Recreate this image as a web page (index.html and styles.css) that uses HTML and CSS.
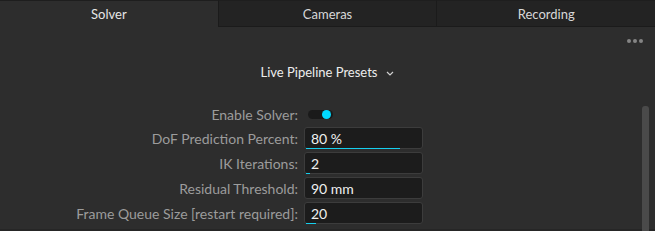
FILE: index.html
```html
<!DOCTYPE html>
<html>
<head>
<meta charset="utf-8">
<link rel="stylesheet" href="styles.css">
</head>
<body>
<div class="app">
  <div class="tabs">
    <div class="tab active">Solver</div>
    <div class="tab">Cameras</div>
    <div class="tab">Recording</div>
  </div>
  <div class="content">
    <div class="menu-row"><span class="dots"><i></i><i></i><i></i></span></div>
    <div class="presets">
      <span>Live Pipeline Presets</span>
      <svg class="chev" width="8" height="5" viewBox="0 0 8 5"><path d="M1 1 L4 4 L7 1" fill="none" stroke="#d0d0d0" stroke-width="1.2"/></svg>
    </div>
    <div class="form">
      <div class="row">
        <label>Enable Solver:</label>
        <div class="toggle"><span class="knob"></span></div>
      </div>
      <div class="row">
        <label>DoF Prediction Percent:</label>
        <div class="field"><span class="val">80 %</span><span class="bar" style="width:80%"></span></div>
      </div>
      <div class="row">
        <label>IK Iterations:</label>
        <div class="field"><span class="val">2</span><span class="bar" style="width:4px"></span></div>
      </div>
      <div class="row">
        <label>Residual Threshold:</label>
        <div class="field"><span class="val">90 mm</span></div>
      </div>
      <div class="row">
        <label>Frame Queue Size [restart required]:</label>
        <div class="field"><span class="val">20</span><span class="bar" style="width:10px"></span></div>
      </div>
    </div>
    <div class="scrollbar"></div>
  </div>
</div>
</body>
</html>
```
FILE: styles.css
```css
html, body {
  margin: 0;
  padding: 0;
  background: #2d2d2d;
}
body {
  font-family: Lato, "Open Sans", sans-serif;
  font-size: 13px;
  width: 655px;
  height: 231px;
  overflow: hidden;
}
.app {
  width: 655px;
  height: 231px;
  display: flex;
  flex-direction: column;
}
.tabs {
  display: flex;
  height: 27px;
  flex: none;
}
.tab {
  flex: 1;
  display: flex;
  align-items: center;
  justify-content: center;
  background: #232323;
  color: #d8d8d8;
  border-top: 1px solid #1e1e1e;
  border-bottom: 1px solid #1b1b1b;
  border-left: 1px solid #1b1b1b;
  box-sizing: border-box;
}
.tab.active {
  background: #2d2d2d;
  border-bottom-color: #2d2d2d;
  border-left: none;
  color: #e6e6e6;
}
.content {
  position: relative;
  flex: 1;
  border-bottom: 2px solid #262626;
}
.menu-row {
  display: flex;
  justify-content: flex-end;
  padding: 12px 12px 0 0;
  height: 6px;
}
.dots {
  display: flex;
  gap: 2px;
}
.dots i {
  width: 4px;
  height: 4px;
  border-radius: 50%;
  background: #858585;
}
.presets {
  display: flex;
  align-items: center;
  justify-content: center;
  gap: 9px;
  margin-top: 19px;
  color: #ededed;
  height: 16px;
}
.chev { margin-top: 2px; }
.form {
  margin-top: 25px;
  display: flex;
  flex-direction: column;
  gap: 3px;
  font-size: 14px;
}
.row {
  display: flex;
  align-items: center;
  height: 22px;
}
.row:first-child { height: 19px; }
label {
  width: 304px;
  text-align: right;
  color: #9c9c9c;
  padding-right: 6px;
  box-sizing: border-box;
}
.toggle {
  margin-left: 4px;
  width: 25px;
  height: 9px;
  border-radius: 5px;
  background: #1a1a1a;
  position: relative;
}
.knob {
  position: absolute;
  right: 2px;
  top: -0.5px;
  width: 9px;
  height: 9px;
  border-radius: 50%;
  background: #00d9ff;
}
.field {
  position: relative;
  width: 119px;
  height: 22px;
  box-sizing: border-box;
  background: #1c1c1c;
  border: 1px solid #3c3c3c;
  border-radius: 3px;
  display: flex;
  align-items: center;
  padding-left: 6px;
  color: #f0f0f0;
}
.bar {
  position: absolute;
  left: 1px;
  bottom: -1px;
  height: 1px;
  background: #16cfee;
}
.scrollbar {
  position: absolute;
  right: 6px;
  top: 79px;
  width: 7px;
  bottom: -2px;
  background: #4a4a4a;
  border-radius: 3px 3px 0 0;
}
```
